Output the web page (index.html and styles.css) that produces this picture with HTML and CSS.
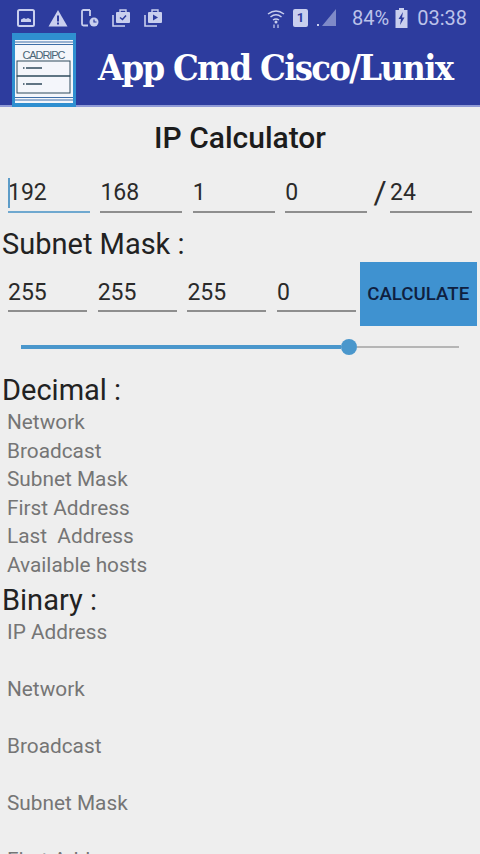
FILE: index.html
```html
<!DOCTYPE html>
<html lang="en">
<head>
  <meta charset="UTF-8">
  <meta name="viewport" content="width=device-width, initial-scale=1.0">
  <title>App Cmd Cisco/Lunix</title>
  <link rel="stylesheet" href="styles.css">
</head>
<body>
  <header class="app-header">
    <div class="status-bar">
      <div class="status-left">
        <svg class="icon" width="18" height="18" viewBox="0 0 18 18"><rect x="1" y="1" width="16" height="16" rx="1.5" fill="none" stroke="#c9cfee" stroke-width="2"/><path d="M4 13 L4 10.5 L7 9 L9 10 L11 9 L14 10.5 L14 13Z" fill="#c9cfee"/></svg>
        <svg class="icon" width="20" height="18" viewBox="0 0 20 18"><path d="M10 1 L19.5 17.5 L0.5 17.5Z" fill="#c9cfee"/><rect x="9" y="6.5" width="2" height="6" fill="#2d3c9e"/><rect x="9" y="13.5" width="2" height="2" fill="#2d3c9e"/></svg>
        <svg class="icon" width="18" height="18" viewBox="0 0 18 18"><path d="M9 1 H2.5 Q1 1 1 2.5 V15 Q1 16.5 2.5 16.5 H7" fill="none" stroke="#c9cfee" stroke-width="1.8"/><path d="M9 1 V7" stroke="#c9cfee" stroke-width="1.8"/><circle cx="13" cy="13" r="4.5" fill="#c9cfee"/><path d="M13 10.5 V13 H15.5" fill="none" stroke="#2d3c9e" stroke-width="1.2"/></svg>
        <svg class="icon" width="19" height="18" viewBox="0 0 19 18"><path d="M1 6 V17 H13" fill="none" stroke="#c9cfee" stroke-width="1.6"/><rect x="4" y="3" width="14" height="11" rx="1" fill="#c9cfee"/><path d="M8 3 V1 H14 V3" fill="none" stroke="#c9cfee" stroke-width="1.4"/><path d="M8 8.5 L10.5 10.5 L14 6.5" fill="none" stroke="#2d3c9e" stroke-width="1.5"/></svg>
        <svg class="icon" width="19" height="18" viewBox="0 0 19 18"><path d="M1 6 V17 H13" fill="none" stroke="#c9cfee" stroke-width="1.6"/><rect x="4" y="3" width="14" height="11" rx="1" fill="#c9cfee"/><path d="M8 3 V1 H14 V3" fill="none" stroke="#c9cfee" stroke-width="1.4"/><path d="M9 5.5 L14 8.5 L9 11.5Z" fill="#2d3c9e"/></svg>
      </div>
      <div class="status-right">
        <svg class="wifi" width="18" height="20" viewBox="0 0 18 20"><path d="M1 6 Q9 0 17 6 M3.5 9 Q9 4.5 14.5 9 M6 12 Q9 10 12 12" fill="none" stroke="#c9cfee" stroke-width="1.5"/><circle cx="9" cy="14" r="1.5" fill="#c9cfee"/><path d="M7 16.5 V20 M11 16.5 V20" stroke="#c9cfee" stroke-width="1.2"/></svg>
        <span class="sim">1</span>
        <svg class="signal" width="20" height="20" viewBox="0 0 20 20"><path d="M19 1 V18 H5Z" fill="#7f8ac8"/><rect x="0" y="16" width="2" height="2" fill="#c9cfee"/></svg>
        <span class="battery-text">84%</span>
        <svg class="battery" width="13" height="20" viewBox="0 0 13 20"><path d="M4 0 H9 V2 H12.5 V20 H0.5 V2 H4Z" fill="#c9cfee"/><path d="M8 4 L3.5 11 H6 L5 17 L9.5 9.5 H7Z" fill="#2d3c9e"/></svg>
        <span class="clock">03:38</span>
      </div>
    </div>
    <div class="toolbar">
      <svg class="logo" width="64" height="74" viewBox="0 0 64 74">
        <rect width="64" height="74" fill="#2f8fd0"/>
        <rect x="3" y="7" width="58" height="63" fill="#f4f6fb"/>
        <path d="M3 9 H61 M3 11.5 H61 M3 64.5 H61 M3 67 H61" stroke="#3f6fa8" stroke-width="1"/>
        <text x="32" y="26" class="logo-text" text-anchor="middle" textLength="43">CADRIPC</text>
        <rect x="5" y="28" width="53" height="15" fill="none" stroke="#2f4a5c" stroke-width="1"/>
        <rect x="5" y="43" width="53" height="17" fill="none" stroke="#2f4a5c" stroke-width="1"/>
        <path d="M11 35 H12.5 M14 35 H30 M11 51 H12.5 M14 51 H30" stroke="#2f4a5c" stroke-width="1.5"/>
      </svg>
      <h1 class="app-title">App Cmd Cisco/Lunix</h1>
    </div>
  </header>

  <main class="content">
    <h2 class="page-title">IP Calculator</h2>

    <div class="ip-row">
      <div class="field field-active"><span class="cursor"></span>192</div>
      <div class="field">168</div>
      <div class="field">1</div>
      <div class="field">0</div>
      <span class="slash">/</span>
      <div class="field">24</div>
    </div>

    <div class="section-label mask-label">Subnet Mask :</div>

    <div class="mask-row">
      <div class="field">255</div>
      <div class="field">255</div>
      <div class="field">255</div>
      <div class="field">0</div>
      <button class="calc-btn">CALCULATE</button>
    </div>

    <div class="slider">
      <div class="slider-fill"></div>
      <div class="slider-thumb"></div>
      <div class="slider-rest"></div>
    </div>

    <div class="section-label decimal-label">Decimal :</div>
    <ul class="result-list">
      <li>Network</li>
      <li>Broadcast</li>
      <li>Subnet Mask</li>
      <li>First Address</li>
      <li>Last&nbsp; Address</li>
      <li>Available hosts</li>
    </ul>

    <div class="section-label binary-label">Binary :</div>
    <ul class="result-list binary-list">
      <li>IP Address</li>
      <li>Network</li>
      <li>Broadcast</li>
      <li>Subnet Mask</li>
      <li>First Address</li>
    </ul>
  </main>
</body>
</html>
```
FILE: styles.css
```css
body {
  margin: 0;
  height: 854px;
  overflow: hidden;
  font-family: Roboto, "Liberation Sans", sans-serif;
  background: #eeeeee;
  color: #222;
}
.app-header {
  height: 107px;
  background: #2d3c9e;
  border-bottom: 2px solid #8f9ad6;
  box-sizing: border-box;
}
.status-bar {
  height: 35px;
  display: flex;
  justify-content: space-between;
  align-items: center;
  padding: 0 13px 0 17px;
  color: #bcc3ea;
}
.status-left {
  display: flex;
  align-items: center;
  gap: 13px;
}
.status-right {
  display: flex;
  align-items: center;
}
.wifi {
  margin-right: 8px;
}
.sim {
  width: 15px;
  height: 18px;
  margin-right: 9px;
  background: #c9cfee;
  border-radius: 2px;
  color: #2d3c9e;
  font-size: 13px;
  font-weight: bold;
  line-height: 18px;
  text-align: center;
}
.signal {
  margin-right: 15px;
}
.battery-text {
  font-size: 20px;
  margin-right: 6px;
}
.battery {
  margin-right: 9px;
}
.clock {
  font-size: 20px;
}
.toolbar {
  height: 70px;
  display: flex;
  align-items: flex-start;
  padding-left: 12px;
}
.logo {
  flex: none;
  margin-top: -2px;
}
.logo-text {
  font-family: "Liberation Sans", sans-serif;
  font-size: 11px;
  fill: #4a6577;
}
.app-title {
  margin: 8px 0 0 22px;
  font-family: "DejaVu Serif Condensed", "DejaVu Serif", serif;
  font-stretch: condensed;
  font-size: 36px;
  font-weight: bold;
  letter-spacing: -1.7px;
  line-height: 48px;
  color: #fff;
  white-space: nowrap;
}
.page-title {
  margin: 0;
  padding-top: 13px;
  height: 35px;
  font-size: 30px;
  font-weight: 500;
  line-height: 35px;
  text-align: center;
  color: #1c1c1c;
}
.ip-row {
  display: flex;
  align-items: flex-end;
  gap: 10.4px;
  margin-top: 22px;
  padding: 0 8px;
}
.ip-row .field {
  width: 82px;
}
.ip-row .field:last-child {
  margin-left: -3px;
}
.field {
  position: relative;
  box-sizing: border-box;
  height: 36px;
  border-bottom: 2px solid #8e8e8e;
  font-size: 23px;
  line-height: 32px;
  color: #2a2a2a;
}
.field-active {
  border-bottom-color: #6fa8cf;
}
.cursor {
  position: absolute;
  left: 0;
  top: 1px;
  width: 2px;
  height: 30px;
  background: #5d9cc8;
}
.slash {
  width: 9px;
  height: 36px;
  margin-left: -4px;
  font-size: 32px;
  line-height: 30px;
  color: #2a2a2a;
}
.section-label {
  padding-left: 2px;
  font-size: 29px;
  line-height: 32px;
  color: #222;
}
.mask-label {
  margin-top: 15px;
}
.mask-row {
  display: flex;
  align-items: flex-start;
  gap: 10.7px;
  margin-top: 2px;
  padding-left: 8px;
}
.mask-row .field {
  width: 79px;
  height: 35px;
  margin-top: 15px;
}
.calc-btn {
  width: 117px;
  height: 64px;
  margin-left: -7px;
  padding: 0;
  border: none;
  background: #3f92d0;
  color: #0f2040;
  font-family: Roboto, "Liberation Sans", sans-serif;
  font-size: 18.7px;
  font-weight: 500;
}
.slider {
  display: flex;
  align-items: center;
  height: 16px;
  margin-top: 13px;
  padding-left: 21px;
}
.slider-fill {
  width: 320px;
  height: 4px;
  background: #4a97cc;
}
.slider-thumb {
  width: 16px;
  height: 16px;
  flex: none;
  border-radius: 50%;
  background: #4a97cc;
}
.slider-rest {
  width: 102px;
  height: 2px;
  background: #b5b5b5;
}
.decimal-label {
  margin-top: 19px;
}
.result-list {
  margin: 0;
  padding: 2px 0 0 7px;
  list-style: none;
  font-size: 20.8px;
  line-height: 28.5px;
  color: #757575;
}
.binary-label {
  margin-top: 5px;
}
.binary-list li {
  height: 57px;
}
```
